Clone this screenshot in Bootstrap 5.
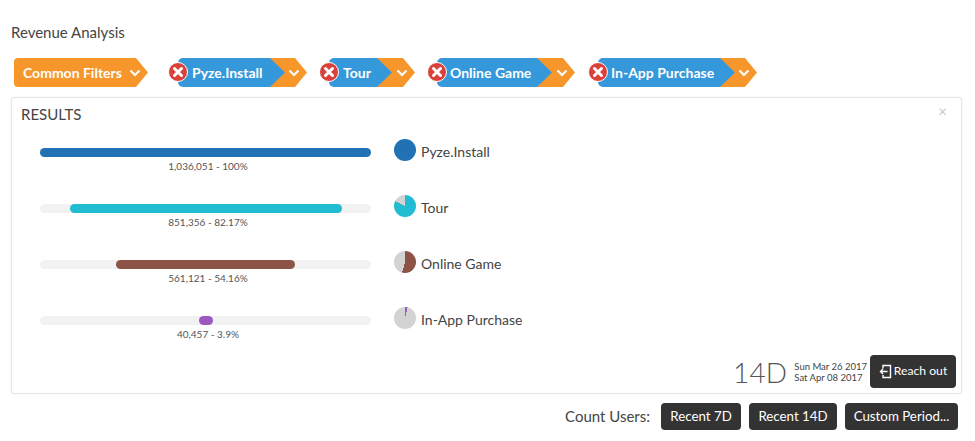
<!DOCTYPE html>
<html lang="en">
<head>
<meta charset="utf-8">
<title>Revenue Analysis</title>
<link rel="stylesheet" href="https://cdn.jsdelivr.net/npm/bootstrap@5.3.0/dist/css/bootstrap.min.css">
<style>
html,body{height:441px;overflow:hidden}
body{font-family:Lato,"Open Sans",sans-serif;color:#444;background:#fff;font-size:14px;padding:0 13px 0 11px}
.page-title{font-size:15px;line-height:18px;padding-top:23px;margin:0;font-weight:400;color:#444}
.chips{margin-top:17px;height:29px;padding-left:3px}
.chip{position:relative;display:flex;height:29px;font-weight:700;font-size:14px;color:#fff}
.chip-orange{background:#f7962a;height:29px;clip-path:polygon(0 0,calc(100% - 12px) 0,100% 50%,calc(100% - 12px) 100%,0 100%);border-radius:4px 0 0 4px;display:flex;align-items:center;color:#fff}
.chip-solo{padding:0 6px 0 9px;width:134px;gap:7px}
.chip-blue{position:absolute;left:10px;top:0;bottom:0;background:#3498db;display:flex;align-items:center;padding-left:14px;border-radius:5px 0 0 5px;clip-path:polygon(0 0,calc(100% - 15px) 0,100% 50%,calc(100% - 15px) 100%,0 100%)}
.chip-tail{width:100%;margin-left:40px;justify-content:flex-end;padding-right:7px;border-radius:0}
.x-btn{position:absolute;left:0;top:4px;width:20px;height:20px;z-index:2}
.chev{width:12px;height:8px;flex:none}
.w-pyze{width:139px;margin-left:20px}.w-pyze .chip-blue{width:107px}
.w-tour{width:96px;margin-left:12px}.w-tour .chip-blue{width:63px}
.w-game{width:148px;margin-left:12px}.w-game .chip-blue{width:115px;padding-left:13px}
.w-iap{width:169px;margin-left:13px}.w-iap .chip-blue{width:137px;padding-left:13px}
.result-box{position:relative;height:297px;margin-top:10px;border:1px solid #e6e6e6;border-radius:3px;box-shadow:0 0 2px rgba(0,0,0,.08);padding:8px 9px}
.result-title{font-size:15px;line-height:17px;margin:0;color:#444;font-weight:400}
.close-x{position:absolute;right:14px;top:4px;font-size:15px;line-height:18px;color:#c8c8c8}
.rows{margin-top:16px;padding-left:19px}
.fn-row{height:56px;align-items:flex-start}
.fn-left{width:331px;flex:none;margin-right:23px;padding-top:9px}
.fn-track{height:9px;background:#f2f2f2;border-radius:5px;position:relative}
.fn-bar{height:9px;border-radius:5px}
.fn-val{text-align:center;font-size:10px;line-height:12px;margin-top:3px;padding-left:5px;color:#555}
.fn-pie{width:22px;height:22px;border-radius:50%;flex:none;margin-right:5px}
.fn-name{font-size:14px;line-height:22px;color:#444;padding-top:2px}
.foot-line{position:absolute;right:5px;bottom:5px}
.big-days{font-size:28px;font-weight:300;line-height:32px;color:#555;margin-right:7px;letter-spacing:.2px}
.days-sub{font-size:9.5px;line-height:11px;color:#444;margin-right:3px;white-space:nowrap}
.dark-btn{background:#333;color:#fff;border:0;border-radius:4px;font-size:13.3px;font-family:inherit;font-weight:400;padding:0;display:inline-flex;align-items:center;justify-content:center}
.reach{width:86px;height:33px;gap:2px;font-size:12.2px}
.count-line{margin-top:9px;padding-right:4px;height:27px;gap:8px}
.count-label{font-size:15px;margin-right:3px;color:#444}
.cb1{width:80px;height:27px}.cb2{width:88px;height:27px}.cb3{width:113px;height:27px}
</style>
</head>
<body>
<h1 class="page-title">Revenue Analysis</h1>
<div class="chips d-flex">
  <div class="chip"><div class="chip-orange chip-solo"><span>Common Filters</span><svg class="chev" viewBox="0 0 12 8"><path d="M1.5 1.5 6 6l4.5-4.5" fill="none" stroke="#fff" stroke-width="2.2"/></svg></div></div>

  <div class="chip w-pyze">
    <div class="chip-orange chip-tail"><svg class="chev" viewBox="0 0 12 8"><path d="M1.5 1.5 6 6l4.5-4.5" fill="none" stroke="#fff" stroke-width="2.2"/></svg></div>
    <div class="chip-blue">Pyze.Install</div>
    <svg class="x-btn" viewBox="0 0 20 20"><circle cx="10" cy="10" r="9.5" fill="#d9413a" stroke="#fff"/><path d="M6.5 6.5l7 7m0-7l-7 7" stroke="#fff" stroke-width="3" stroke-linecap="round"/></svg>
  </div>
  <div class="chip w-tour">
    <div class="chip-orange chip-tail"><svg class="chev" viewBox="0 0 12 8"><path d="M1.5 1.5 6 6l4.5-4.5" fill="none" stroke="#fff" stroke-width="2.2"/></svg></div>
    <div class="chip-blue">Tour</div>
    <svg class="x-btn" viewBox="0 0 20 20"><circle cx="10" cy="10" r="9.5" fill="#d9413a" stroke="#fff"/><path d="M6.5 6.5l7 7m0-7l-7 7" stroke="#fff" stroke-width="3" stroke-linecap="round"/></svg>
  </div>
  <div class="chip w-game">
    <div class="chip-orange chip-tail"><svg class="chev" viewBox="0 0 12 8"><path d="M1.5 1.5 6 6l4.5-4.5" fill="none" stroke="#fff" stroke-width="2.2"/></svg></div>
    <div class="chip-blue">Online Game</div>
    <svg class="x-btn" viewBox="0 0 20 20"><circle cx="10" cy="10" r="9.5" fill="#d9413a" stroke="#fff"/><path d="M6.5 6.5l7 7m0-7l-7 7" stroke="#fff" stroke-width="3" stroke-linecap="round"/></svg>
  </div>
  <div class="chip w-iap">
    <div class="chip-orange chip-tail"><svg class="chev" viewBox="0 0 12 8"><path d="M1.5 1.5 6 6l4.5-4.5" fill="none" stroke="#fff" stroke-width="2.2"/></svg></div>
    <div class="chip-blue">In-App Purchase</div>
    <svg class="x-btn" viewBox="0 0 20 20"><circle cx="10" cy="10" r="9.5" fill="#d9413a" stroke="#fff"/><path d="M6.5 6.5l7 7m0-7l-7 7" stroke="#fff" stroke-width="3" stroke-linecap="round"/></svg>
  </div>
</div>

<div class="result-box bg-white">
  <p class="result-title">RESULTS</p>
  <span class="close-x">×</span>
  <div class="rows">
    <div class="d-flex fn-row">
      <div class="fn-left"><div class="fn-track"><div class="fn-bar" style="margin-left:0;width:331px;background:#2172b4"></div></div><div class="fn-val">1,036,051 - 100%</div></div>
      <div class="fn-pie" style="background:#2172b4"></div><div class="fn-name">Pyze.Install</div>
    </div>
    <div class="d-flex fn-row">
      <div class="fn-left"><div class="fn-track"><div class="fn-bar" style="margin-left:30px;width:272px;background:#1fbcd2"></div></div><div class="fn-val">851,356 - 82.17%</div></div>
      <div class="fn-pie" style="background:conic-gradient(#1fbcd2 0 82.17%,#d3d3d3 0)"></div><div class="fn-name">Tour</div>
    </div>
    <div class="d-flex fn-row">
      <div class="fn-left"><div class="fn-track"><div class="fn-bar" style="margin-left:76px;width:179px;background:#8d5347"></div></div><div class="fn-val">561,121 - 54.16%</div></div>
      <div class="fn-pie" style="background:conic-gradient(#8d5347 0 54.16%,#d3d3d3 0)"></div><div class="fn-name">Online Game</div>
    </div>
    <div class="d-flex fn-row">
      <div class="fn-left"><div class="fn-track"><div class="fn-bar" style="margin-left:159px;width:14px;background:#9b59c0"></div></div><div class="fn-val">40,457 - 3.9%</div></div>
      <div class="fn-pie" style="background:conic-gradient(#9b59c0 0 3.9%,#d3d3d3 0)"></div><div class="fn-name">In-App Purchase</div>
    </div>
  </div>
  <div class="foot-line d-flex align-items-center">
    <span class="big-days">14D</span>
    <div class="days-sub"><div>Sun Mar 26 2017</div><div>Sat Apr 08 2017</div></div>
    <button class="btn dark-btn reach" type="button"><svg width="13" height="15" viewBox="0 0 13 15"><path d="M4 4.5V1.5h7.5v12H4V11M8.5 7.5H1.5M4 5 1.5 7.5 4 10" fill="none" stroke="#fff" stroke-width="1.4"/></svg>Reach out</button>
  </div>
</div>

<div class="count-line d-flex justify-content-end align-items-center">
  <span class="count-label">Count Users:</span>
  <button class="btn dark-btn cb1" type="button">Recent 7D</button>
  <button class="btn dark-btn cb2" type="button">Recent 14D</button>
  <button class="btn dark-btn cb3" type="button">Custom Period...</button>
</div>
<script src="https://cdn.jsdelivr.net/npm/bootstrap@5.3.0/dist/js/bootstrap.bundle.min.js"></script>
</body>
</html>
